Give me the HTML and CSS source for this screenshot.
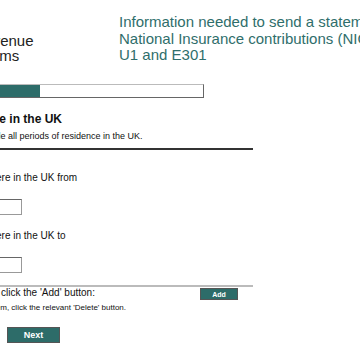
FILE: index.html
```html
<!DOCTYPE html>
<html lang="en">
<head>
  <meta charset="UTF-8" />
  <meta name="viewport" content="width=device-width, initial-scale=1.0"/>
  <title>Residence in the UK</title>
  <link rel="stylesheet" href="styles.css">
</head>
<body>
  <div class="page">
    <div class="masthead">
      <div class="logo">HM Revenue<br>&amp; Customs</div>
      <div class="service-title">Information needed to send a statement of National Insurance contributions (NICs) on forms U1 and E301</div>
    </div>

    <div class="progress"><div class="progress-fill" style="width: 93px"></div></div>

    <h2>Residence in the UK</h2>
    <p class="intro">Please provide all periods of residence in the UK.</p>
    <hr class="rule-dark">

    <form id="residenceForm">
      <label for="fromDate">Date you were in the UK from</label>
      <input type="text" id="fromDate" class="date-input">
      <label for="toDate">Date you were in the UK to</label>
      <input type="text" id="toDate" class="date-input">

      <hr class="rule-light">

      <div class="add-row">
        <span>To add one, click the 'Add' button:</span>
        <button type="button" class="btn-small">Add</button>
      </div>
      <p class="note">To delete an item, click the relevant 'Delete' button.</p>

      <button type="submit" class="btn-next">Next</button>
    </form>
  </div>
</body>
</html>
```

FILE: styles.css
```css
body {
  margin: 0;
  font-family: "Liberation Sans", Arial, sans-serif;
  background: #fff;
  color: #111;
  overflow: hidden;
}

.page {
  margin-left: -54px;
  width: 420px;
}

.masthead {
  display: flex;
  height: 84px;
}

.logo {
  width: 173px;
  flex-shrink: 0;
  padding-top: 33px;
  font-size: 15px;
  line-height: 15px;
  color: #222;
}

.service-title {
  width: 330px;
  flex-shrink: 0;
  padding-top: 14px;
  font-size: 15px;
  line-height: 16.5px;
  color: #2f6e6b;
}

.progress {
  width: 256px;
  height: 12px;
  border: 1px solid #666;
  border-top-color: #bbb;
}

.progress-fill {
  height: 100%;
  background: #2d6c69;
}

h2 {
  margin: 14px 0 0;
  font-size: 12px;
  line-height: 14px;
}

.intro {
  margin: 5px 0 0;
  font-size: 9px;
  line-height: 11px;
}

.rule-dark {
  width: 307px;
  margin: 6px 0 0;
  border: none;
  height: 2px;
  background: #333;
}

form label {
  display: block;
  margin-top: 15px;
  font-size: 10px;
  line-height: 12px;
}

form label:first-child {
  margin-top: 22px;
}

form label + input {
  margin-top: 15px;
}

.date-input {
  display: block;
  box-sizing: border-box;
  width: 76px;
  height: 16px;
  padding: 0 2px;
  border: 1px solid #999;
  border-top-color: #666;
  border-left-color: #666;
}

.rule-light {
  width: 307px;
  margin: 12px 0 0;
  border: none;
  height: 2px;
  background: #bbb;
}

.add-row {
  display: flex;
  align-items: flex-start;
  justify-content: space-between;
  width: 292px;
  font-size: 10px;
  line-height: 12px;
}

.btn-small {
  width: 38px;
  height: 12px;
  margin-top: 1px;
  padding: 0;
  background: #2d6c69;
  color: #fff;
  border: 1px solid #555;
  font-family: inherit;
  font-size: 7px;
  font-weight: bold;
}

.note {
  margin: 3px 0 0;
  font-size: 8px;
  line-height: 10px;
}

.btn-next {
  display: block;
  width: 53px;
  height: 16px;
  margin: 14px 0 0 61px;
  padding: 0;
  background: #2d6c69;
  color: #fff;
  border: 1px solid #555;
  font-family: inherit;
  font-size: 9px;
  font-weight: bold;
}
```
